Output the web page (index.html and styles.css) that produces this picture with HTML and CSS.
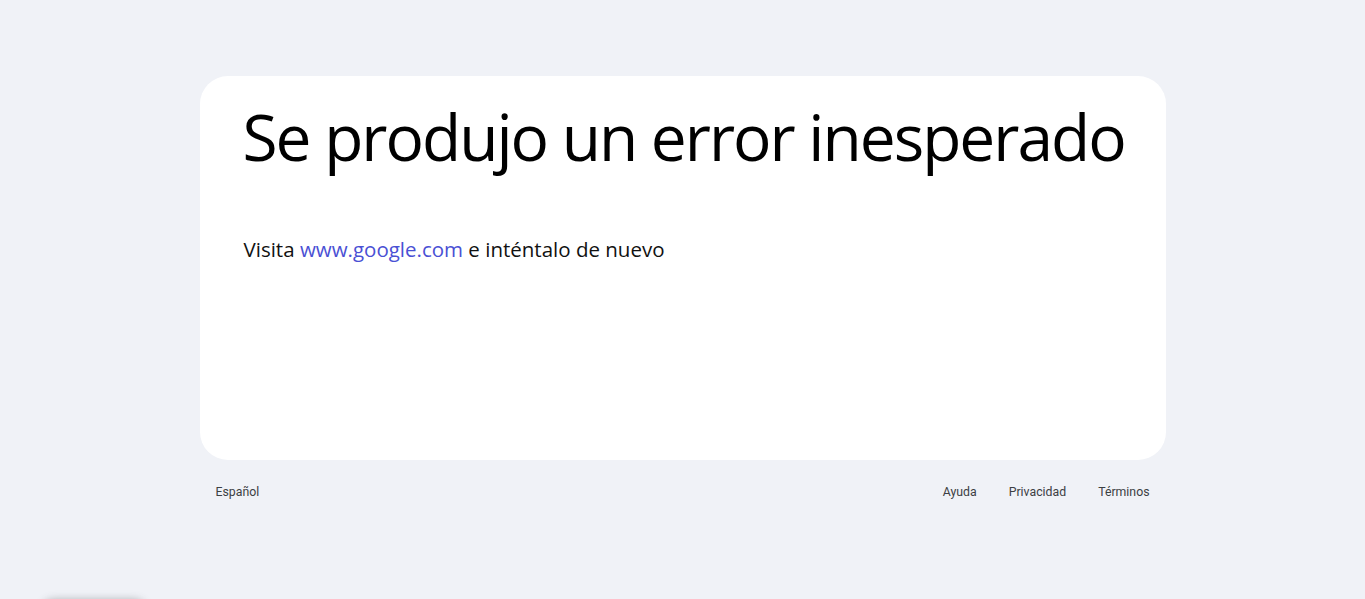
FILE: index.html
```html
<!DOCTYPE html>
<html lang="es">
<head>
<meta charset="utf-8">
<title>Error</title>
<link rel="stylesheet" href="styles.css">
</head>
<body>
<main class="page">
  <section class="card">
    <h1 class="title">Se produjo un error inesperado</h1>
    <p class="message">Visita <a class="link" href="#">www.google.com</a> e inténtalo de nuevo</p>
  </section>
  <footer class="footer">
    <div class="lang">Español</div>
    <nav class="links">
      <a href="#">Ayuda</a>
      <a href="#">Privacidad</a>
      <a href="#">Términos</a>
    </nav>
  </footer>
</main>
<div class="shadow-blob"></div>
</body>
</html>
```
FILE: styles.css
```css
html, body {
  margin: 0;
  padding: 0;
  height: 100%;
  background: #f0f2f7;
  overflow: hidden;
}
body {
  font-family: "Open Sans", "Noto Sans", sans-serif;
}
.page {
  width: 966px;
  margin: 0 auto;
  padding-top: 76px;
}
.card {
  background: #ffffff;
  border-radius: 28px;
  height: 384px;
  box-sizing: border-box;
  padding: 21px 40px 0 43px;
}
.title {
  margin: 0;
  font-weight: 400;
  font-size: 64px;
  letter-spacing: -2px;
  line-height: 80px;
  white-space: nowrap;
  color: #000;
}
.message {
  margin: 58px 0 0 1px;
  font-size: 20.5px;
  line-height: 28px;
  color: #111;
}
.link {
  color: #4a50d4;
  text-decoration: none;
}
.footer {
  display: flex;
  justify-content: space-between;
  align-items: center;
  padding: 25px 16px 0 16px;
  font-family: Roboto, "Liberation Sans", sans-serif;
  font-size: 12.3px;
  color: #3c4043;
}
.links {
  display: flex;
  gap: 32px;
}
.links a {
  color: #3c4043;
  text-decoration: none;
}
.shadow-blob {
  position: absolute;
  left: 44px;
  top: 603px;
  width: 100px;
  height: 20px;
  border-radius: 10px;
  background: #e4e6ea;
  box-shadow: 0 -1px 8px 2px rgba(60, 64, 67, 0.4);
}
```
